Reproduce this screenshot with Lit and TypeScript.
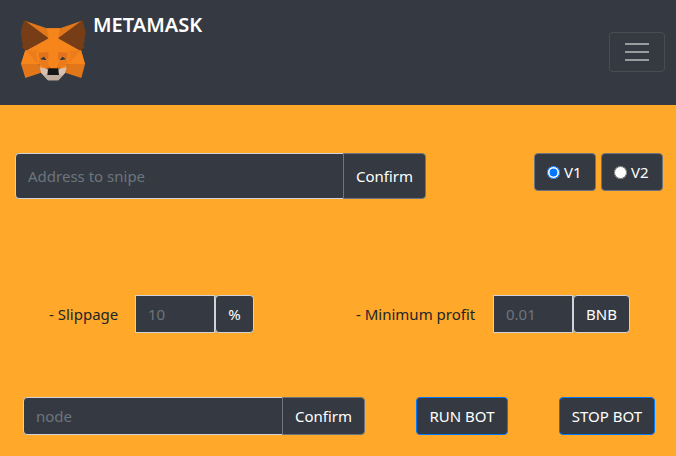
import { LitElement, html, css, svg } from "lit";
import { customElement, state } from "lit/decorators.js";

const fox = svg`
  <path fill="#e2761b" d="m44 38 66 23h40l66-23-72 57h-28z"/>
  <path fill="#763d16" d="M42 36 32 72l4 22-2 3 4 4-3 3 4 4-3 10 12 11 68-38z"/>
  <path fill="#763d16" d="m218 36 9 36-4 22 2 3-4 4 3 3-4 4 3 10-12 11-67-38z"/>
  <path fill="#f6851b" d="M110 61h40l-6 30 3 59-7 38h-20l-7-38 3-59z"/>
  <path fill="#f6851b" d="m116 91-68 37-12 40h54l30 10h20l30-10h53l-12-40-67-37z"/>
  <path fill="#ec7d1c" d="m46 127 38 1-6 6 6 34H33z"/>
  <path fill="#ec7d1c" d="m213 127-38 1 6 6-6 34h50z"/>
  <path fill="#f6851b" d="m46 127 38 41H33z"/>
  <path fill="#f6851b" d="m213 127-38 41h50z"/>
  <path fill="#e2761b" d="M33 168h51l14 25-52 17z"/>
  <path fill="#e2761b" d="M225 168h-50l-14 25 53 17z"/>
  <path fill="#f6851b" d="m84 168 32 8-18 17z"/>
  <path fill="#f6851b" d="m175 168-32 8 18 17z"/>
  <path fill="#e2721c" d="m86 134 29-2v24l-13-9-14 5z"/>
  <path fill="#e2721c" d="m173 134-29-2v24l13-9 14 5z"/>
  <path fill="#233447" d="m90 154 12-8 8 11z"/>
  <path fill="#233447" d="m169 154-12-8-8 11z"/>
  <path fill="#ea7b1c" d="m86 157 27-1 4 28-28-14zm87 0-27-1-4 28 28-14z"/>
  <path fill="#d7c1b3" d="m89 178 26 6h29l26-6-5 18-20 21h-31l-20-21z"/>
  <path fill="#c0ad9e" d="m100 202 14-3h31l14 3-14 15h-31z"/>
  <path fill="#161616" d="m114 184 3-3h25l3 3 2 17h-35z"/>
`;

@customElement("app-root")
export class AppRoot extends LitElement {
  static styles = css`
    :host {
      display: block;
      min-height: 100vh;
      background: #ffa829;
      color: #212529;
      font: 15px/24px "Segoe UI", "Noto Sans", sans-serif;
    }
    *, *::before {
      box-sizing: border-box;
    }
    button, input {
      font: inherit;
      margin: 0;
    }
    .navbar {
      display: flex;
      justify-content: space-between;
      align-items: center;
      padding: 8px 11px 9px 20px;
      min-height: 105px;
      background: #353a42;
    }
    .brand {
      display: flex;
      gap: 7px;
      align-self: flex-start;
      color: #fff;
      font-size: 20px;
      font-weight: 600;
      line-height: 34px;
      text-decoration: none;
    }
    .logo {
      width: 66px;
      height: 62px;
      margin-top: 12px;
    }
    .toggler {
      display: flex;
      align-items: center;
      justify-content: center;
      width: 56px;
      height: 40px;
      padding: 0;
      border: 1px solid #494d52;
      border-radius: 4px;
      background: none;
    }
    .row {
      display: flex;
      align-items: center;
    }
    .target {
      align-items: flex-start;
      justify-content: space-between;
      gap: 108px;
      padding: 48px 13px 0 15px;
    }
    .limits {
      gap: 102px;
      padding: 96px 46px 0 49px;
    }
    .actions {
      gap: 51px;
      padding: 64px 21px 21px 23px;
    }
    .group {
      display: flex;
      flex: 1;
      min-width: 0;
      height: 38px;
    }
    .tall {
      height: 46px;
    }
    .field {
      flex: 1;
      min-width: 0;
      padding: 0 12px;
      border: 1px solid #ced4da;
      border-radius: 4px 0 0 4px;
      background: #353a42;
      color: #fff;
    }
    .field::placeholder {
      color: #6c757d;
      opacity: 1;
    }
    .btn {
      flex: none;
      height: 38px;
      padding: 0;
      border: 1px solid #007bff;
      border-radius: 4px;
      background: #353a42;
      color: #fff;
      white-space: nowrap;
    }
    .confirm {
      width: 83px;
      height: 100%;
      margin-left: -1px;
      border-color: #6c757d;
      border-radius: 0 4px 4px 0;
    }
    .run {
      width: 92px;
    }
    .stop {
      width: 96px;
    }
    .versions {
      display: flex;
      gap: 5px;
    }
    .version {
      display: flex;
      align-items: center;
      gap: 4px;
      width: 62px;
      height: 38px;
      padding-left: 12px;
      border: 1px solid #6c757d;
      border-radius: 4px;
      background: #353a42;
      color: #fff;
    }
    .radio {
      width: 13px;
      height: 13px;
    }
    .limit {
      display: flex;
      align-items: center;
      height: 38px;
    }
    .name {
      width: 86px;
      white-space: nowrap;
    }
    .wide {
      width: 137px;
    }
    .amount {
      flex: none;
      width: 80px;
      height: 100%;
      border-radius: 0;
    }
    .unit {
      display: flex;
      align-items: center;
      justify-content: center;
      width: 39px;
      height: 100%;
      border: 1px solid #ced4da;
      border-radius: 4px;
      background: #353a42;
      color: #fff;
    }
    .wide ~ .unit {
      width: 57px;
    }
  `;

  @state() private version = "V1";

  private versionOption(name: string) {
    return html`<label class="version">
      <input class="radio" type="radio" name="version" .value=${name}
        .checked=${this.version === name}
        @change=${() => (this.version = name)} />${name}
    </label>`;
  }

  private limit(id: string, name: string, hint: string, unit: string, wide = false) {
    return html`<div class="limit">
      <label class="name ${wide ? "wide" : ""}" for=${id}>- ${name}</label>
      <input class="field amount" id=${id} placeholder=${hint} />
      <span class="unit">${unit}</span>
    </div>`;
  }

  render() {
    return html`
      <header class="navbar">
        <a class="brand" href="#">
          <svg class="logo" viewBox="30 36 198 186" aria-hidden="true">${fox}</svg>
          METAMASK
        </a>
        <button class="toggler" aria-label="Toggle navigation">
          <svg width="30" height="30" viewBox="0 0 30 30" aria-hidden="true">
            <path stroke="#999c9f" stroke-width="2" d="M3 7h24M3 15h24M3 23h24" />
          </svg>
        </button>
      </header>
      <main>
        <div class="row target">
          <div class="group tall">
            <input class="field" placeholder="Address to snipe" aria-label="Address to snipe" />
            <button class="btn confirm">Confirm</button>
          </div>
          <div class="versions">${this.versionOption("V1")}${this.versionOption("V2")}</div>
        </div>
        <div class="row limits">
          ${this.limit("slippage", "Slippage", "10", "%")}
          ${this.limit("profit", "Minimum profit", "0.01", "BNB", true)}
        </div>
        <div class="row actions">
          <div class="group">
            <input class="field" placeholder="node" aria-label="node" />
            <button class="btn confirm">Confirm</button>
          </div>
          <button class="btn run">RUN BOT</button>
          <button class="btn stop">STOP BOT</button>
        </div>
      </main>
    `;
  }
}
